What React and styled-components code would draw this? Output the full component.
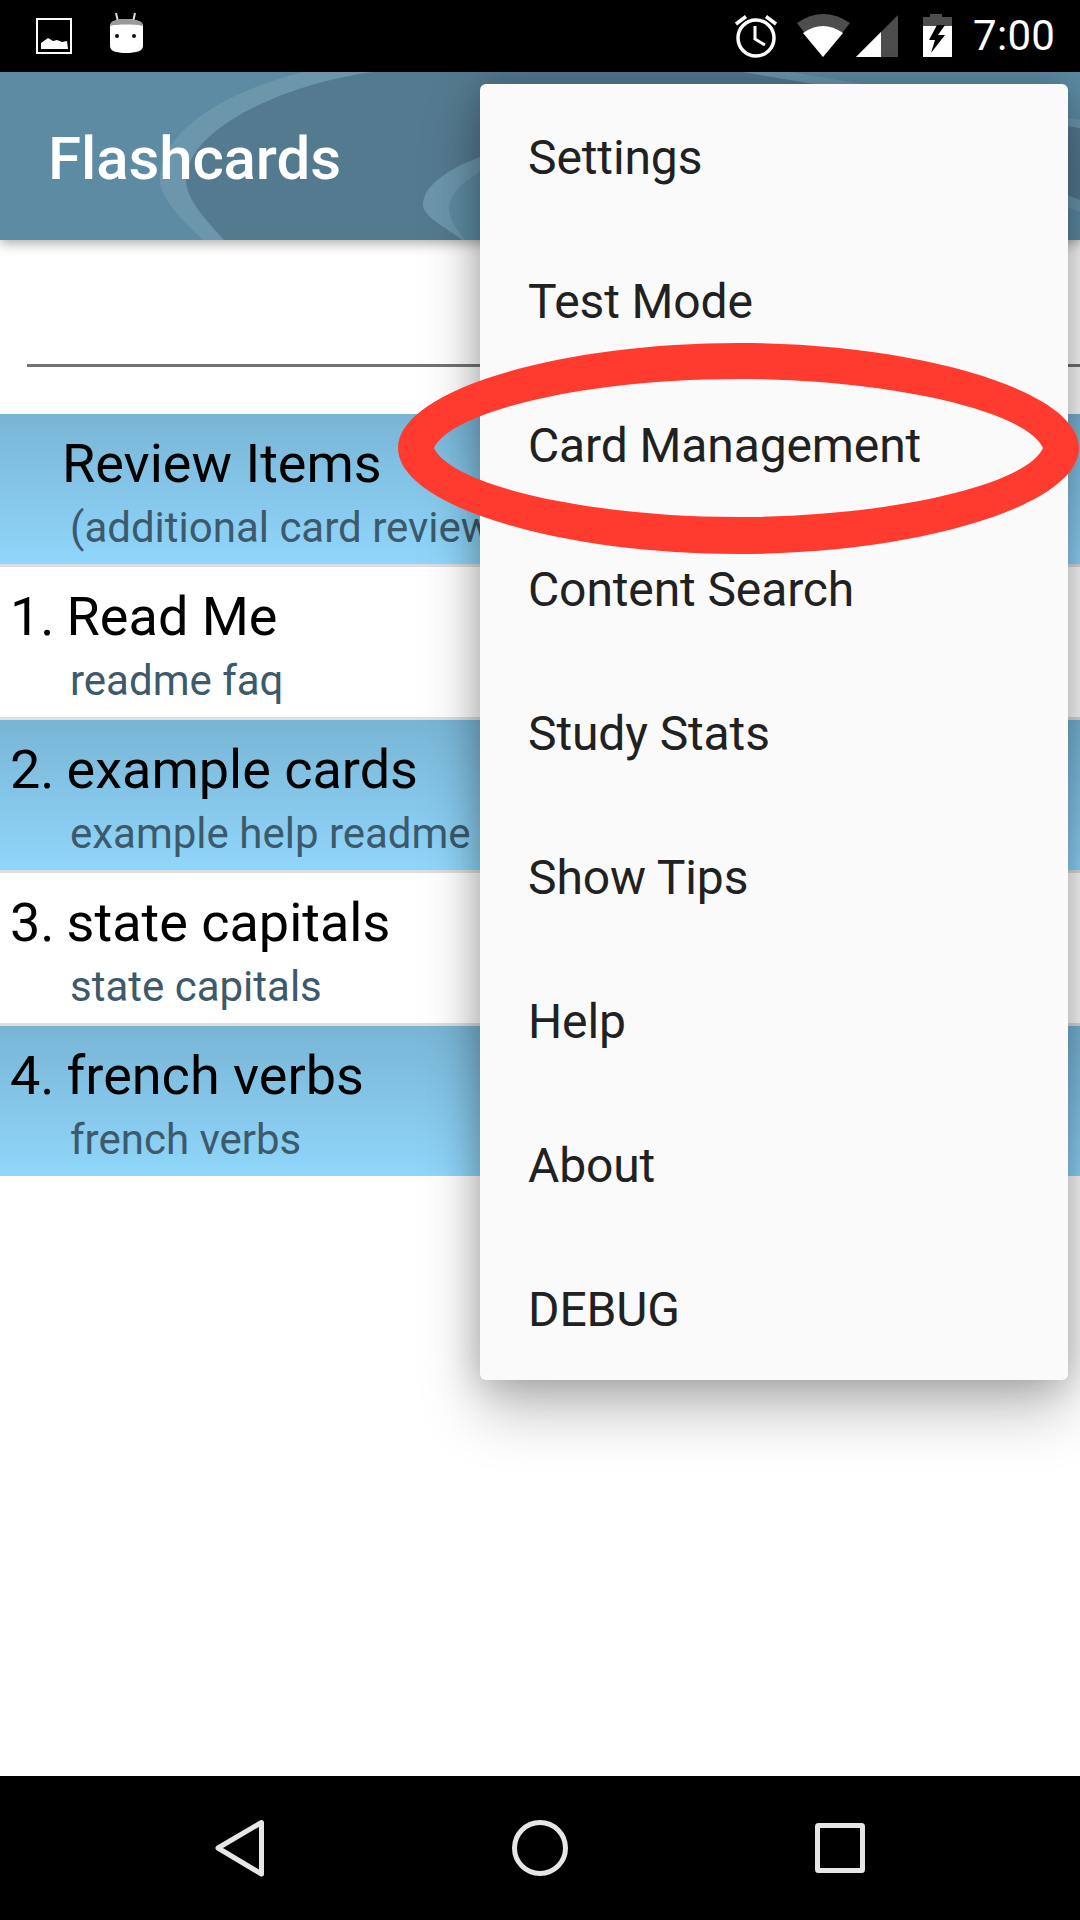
import React from "react";
import styled, { createGlobalStyle } from "styled-components";

const Global = createGlobalStyle`
  html, body { margin: 0; padding: 0; background: #fff; }
  body { font-family: Roboto, "Liberation Sans", sans-serif; }
  * { box-sizing: border-box; }
`;

const Screen = styled.div`
  position: relative;
  width: 1080px;
  height: 1920px;
  display: flex;
  flex-direction: column;
  overflow: hidden;
  background: #fff;
`;

const StatusBar = styled.div`
  height: 72px;
  flex: none;
  background: #000;
  display: flex;
  align-items: center;
  padding: 0 26px 0 36px;
`;

const StatusGroup = styled.div`
  display: flex;
  align-items: center;
`;

const StatusSpacer = styled.div`
  flex: 1;
`;

const Icon = styled.svg`
  display: block;
  flex: none;
  margin-left: ${(p) => p.$gap || 0}px;
`;

const Clock = styled.span`
  margin-left: 21px;
  color: #fff;
  font-size: 42px;
  letter-spacing: 0.3px;
  line-height: 72px;
  width: 81px;
  white-space: nowrap;
`;

const ActionBar = styled.div`
  position: relative;
  z-index: 1;
  height: 168px;
  flex: none;
  background: #5d8ba3;
  box-shadow: 0 3px 12px rgba(0, 0, 0, 0.35);
  display: flex;
  align-items: center;
  padding-left: 48px;
`;

const Swirl = styled.svg`
  position: absolute;
  left: 0;
  top: 0;
`;

const Title = styled.h1`
  position: relative;
  margin: 5px 0 0;
  color: #fff;
  font-size: 60px;
  font-weight: 500;
  line-height: 70px;
  letter-spacing: -0.1px;
`;

const SearchArea = styled.div`
  height: 174px;
  flex: none;
  padding: 124px 0 0 27px;
`;

const SearchLine = styled.div`
  height: 3px;
  background: #737373;
`;

const List = styled.div`
  display: flex;
  flex-direction: column;
`;

const Row = styled.div`
  height: ${(p) => (p.$last ? 150 : 153)}px;
  flex: none;
  padding-top: 20px;
  overflow: hidden;
  white-space: nowrap;
  background: ${(p) =>
    p.$shaded ? "linear-gradient(#79b5d5, #90d6fb)" : "#fff"};
  border-bottom: ${(p) => (p.$last ? "none" : "3px solid #dedede")};
`;

const RowTitle = styled.div`
  font-size: 54px;
  line-height: 60px;
  color: #000;
  padding-left: ${(p) => (p.$indent ? 62 : 10)}px;
`;

const RowNumber = styled.span`
  margin-right: -1.4px;
`;

const RowSub = styled.div`
  font-size: 42px;
  line-height: 50px;
  color: #3c5a6b;
  margin-top: 9px;
  padding-left: 70px;
`;

const Grow = styled.div`
  flex: 1;
`;

const NavBar = styled.div`
  height: 144px;
  flex: none;
  background: #000;
  display: grid;
  grid-template-columns: repeat(3, 300px);
  justify-content: center;
  place-items: center;
`;

const Menu = styled.div`
  position: absolute;
  z-index: 2;
  left: 480px;
  top: 84px;
  width: 588px;
  background: #fafafa;
  border-radius: 6px;
  box-shadow: 0 30px 60px rgba(0, 0, 0, 0.26), 0 0 36px rgba(0, 0, 0, 0.22);
`;

const MenuItem = styled.div`
  height: 144px;
  display: flex;
  align-items: center;
  padding: 2px 0 0 48px;
  font-size: 48px;
  letter-spacing: -0.12px;
  color: #212121;
`;

const Ring = styled.svg`
  position: absolute;
  z-index: 3;
  left: 0;
  top: 0;
  pointer-events: none;
`;

const rows = [
  { title: "Review Items", sub: "(additional card reviews)", shaded: true, indent: true },
  { num: "1. ", title: "Read Me", sub: "readme faq" },
  { num: "2. ", title: "example cards", sub: "example help readme", shaded: true },
  { num: "3. ", title: "state capitals", sub: "state capitals" },
  { num: "4. ", title: "french verbs", sub: "french verbs", shaded: true, last: true },
];

const menu = [
  "Settings",
  "Test Mode",
  "Card Management",
  "Content Search",
  "Study Stats",
  "Show Tips",
  "Help",
  "About",
  "DEBUG",
];

const PictureIcon = () => (
  <Icon width="36" height="72" viewBox="36 0 36 72">
    <rect x="37" y="19" width="34" height="34" fill="none" stroke="#fff" strokeWidth="2" />
    <path d="M41 49 V43 L48 38 L53 41 L57 40 L62 42 L67 41 L68 49 Z" fill="#fff" />
  </Icon>
);

const AndroidIcon = () => (
  <Icon $gap={38} width="33" height="72" viewBox="110 0 33 72">
    <path d="M116 13 L118 22 M135 13 L133 22" stroke="#ddd" strokeWidth="2" fill="none" />
    <path d="M110 26 C110 21 117 19 126 19 C135 19 143 21 143 26 L143 46 C143 51 136 53 126 53 C116 53 110 51 110 46 Z" fill="#fff" />
    <path d="M110 26 C110 21 117 19 126 19 C135 19 143 21 143 26 C136 24 116 24 110 26 Z" fill="#9a9a9a" />
    <circle cx="117" cy="36" r="2" fill="#111" />
    <circle cx="134" cy="36" r="2" fill="#111" />
  </Icon>
);

const AlarmIcon = () => (
  <Icon width="42" height="72" viewBox="735 0 42 72">
    <circle cx="756" cy="38" r="18" fill="none" stroke="#fff" strokeWidth="3.5" />
    <path d="M755 26 V39 L765 45" fill="none" stroke="#fff" strokeWidth="3" />
    <path d="M736 24 L746 16.5 M776 24 L766 16.5" stroke="#fff" strokeWidth="3.5" />
  </Icon>
);

const WifiIcon = () => (
  <Icon $gap={20} width="53" height="72" viewBox="797 0 53 72">
    <path d="M797 23 Q823 5 850 23 L823 57 Z" fill="#4d4d4d" />
    <path d="M803 33 Q823 19 843 33 L823 57 Z" fill="#fff" />
  </Icon>
);

const SignalIcon = () => (
  <Icon $gap={6} width="42" height="72" viewBox="856 0 42 72">
    <path d="M856 57 L898 15 V57 Z" fill="#4d4d4d" />
    <path d="M856 57 L881 32 V57 Z" fill="#fff" />
  </Icon>
);

const BatteryIcon = () => (
  <Icon $gap={25} width="29" height="72" viewBox="923 0 29 72">
    <path d="M923 26 V17 H930 V14 H942 V17 H952 V26 Z" fill="#4d4d4d" />
    <rect x="923" y="26" width="29" height="31" fill="#fff" />
    <path d="M937 25 L929 40 H935 L931 53 L945 35 H938 L945 25 Z" fill="#000" />
  </Icon>
);

const BackIcon = () => (
  <svg width="50" height="58" viewBox="215 1819 50 58">
    <path d="M261.5 1822.5 V1874 L218 1848 Z" fill="none" stroke="#e6e6e6" strokeWidth="5" strokeLinejoin="round" />
  </svg>
);

const HomeIcon = () => (
  <svg width="58" height="58" viewBox="0 0 58 58">
    <circle cx="29" cy="29" r="25.5" fill="none" stroke="#e6e6e6" strokeWidth="5" />
  </svg>
);

const RecentIcon = () => (
  <svg width="50" height="50" viewBox="0 0 50 50">
    <rect x="2.5" y="2.5" width="45" height="45" rx="1" fill="none" stroke="#e6e6e6" strokeWidth="5" strokeLinejoin="round" />
  </svg>
);

export default function App() {
  return (
    <Screen>
      <Global />
      <StatusBar>
        <StatusGroup>
          <PictureIcon />
          <AndroidIcon />
        </StatusGroup>
        <StatusSpacer />
        <StatusGroup>
          <AlarmIcon />
          <WifiIcon />
          <SignalIcon />
          <BatteryIcon />
          <Clock>7:00</Clock>
        </StatusGroup>
      </StatusBar>
      <ActionBar>
        <Swirl width="1080" height="168" viewBox="0 72 1080 168">
          <path d="M303 72 C225 92 160 130 160 180 C160 200 185 222 203 240 H1080 V128 L743 72 Z" fill="#6c96ab" />
          <path d="M372 72 C280 85 186 130 186 180 C186 200 208 222 224 240 H1080 V128 L743 72 Z" fill="#547a8f" />
          <path d="M790 72 L1080 120 V128 L743 72 Z" fill="#6c96ab" />
          <path d="M480 157 C450 168 423 185 423 205 C423 217 450 230 462 240 H1080 V200 C900 130 600 130 480 157 Z" fill="#6c96ab" />
          <path d="M480 172 C462 182 449 195 449 208 C449 220 458 232 465 240 H1080 V212 C900 145 600 145 480 172 Z" fill="#5d8ba3" />
        </Swirl>
        <Title>Flashcards</Title>
      </ActionBar>
      <SearchArea>
        <SearchLine />
      </SearchArea>
      <List>
        {rows.map((r) => (
          <Row key={r.title} $shaded={r.shaded} $last={r.last}>
            <RowTitle $indent={r.indent}>
              {r.num && <RowNumber>{r.num}</RowNumber>}
              {r.title}
            </RowTitle>
            <RowSub>{r.sub}</RowSub>
          </Row>
        ))}
      </List>
      <Grow />
      <NavBar>
        <BackIcon />
        <HomeIcon />
        <RecentIcon />
      </NavBar>
      <Menu>
        {menu.map((m) => (
          <MenuItem key={m}>{m}</MenuItem>
        ))}
      </Menu>
      <Ring width="1080" height="1920" viewBox="0 0 1080 1920">
        <path
          fillRule="evenodd"
          fill="#ff3b30"
          d="M398 448 C398 390 560 343 738 343 C916 343 1079 390 1079 448 C1079 506 916 554 738 554 C560 554 398 506 398 448 Z
             M434 448 C452 410 590 379 738 379 C886 379 1026 410 1043 448 C1026 486 886 517 738 517 C590 517 452 486 434 448 Z"
        />
      </Ring>
    </Screen>
  );
}
